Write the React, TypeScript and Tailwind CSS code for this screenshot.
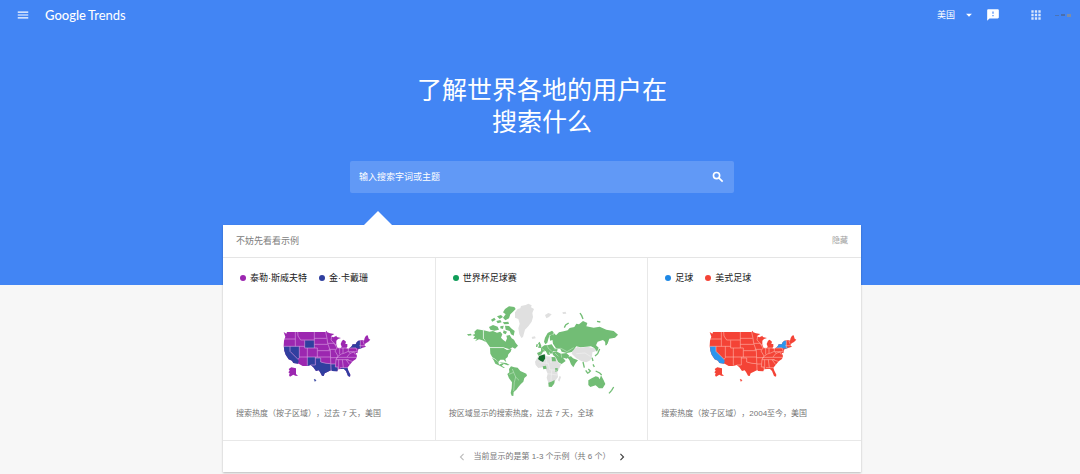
import React from "react";
import {
  MdApps,
  MdArrowDropDown,
  MdChevronLeft,
  MdChevronRight,
  MdFeedback,
  MdMenu,
} from "react-icons/md";

type State = "ca" | "nv" | "wy" | "nm" | "tx" | "la" | "fl" | "ny";

const statePaths: Record<State, string> = {
  ca: "M42 79H60V94L84 118L86 124L84 131L70 129L66 122L56 118L47 104L43 92Z",
  nv: "M60 79H88V113L84 118L60 94Z",
  wy: "M104 61H133V84H104Z",
  nm: "M112 111H136V135H122L112 138Z",
  tx: "M136 114H152V126L168 130L182 131L184 150L172 156L164 160L161 168L156 167L150 156L146 151L138 153L130 142L122 135H136Z",
  la: "M183 132H196V141H204L202 154L186 153L184 150Z",
  fl: "M212 143H232L235 152L241 164L240 170L234 168L228 153L222 147L213 147Z",
  ny: "M239 84L245 79L248 73L257 73L260 67L265 62H271V78L276 84L264 86L258 83Z",
};

const usOutline =
  "M41 36L49 41L51 36H167L169 32L172 37L180 40L193 42L182 49L190 52L200 47L200 51L213 54L204 57L199 62V74L203 84H213L215 80L212 72L216 62L221 59L228 65L226 72L232 72L232 80L228 85L236 86L245 79L248 73H257L260 67L265 62L278 60L282 62L284 54L288 47L293 46L296 56L301 59L294 66L287 70L283 76L288 80L276 84L265 88L262 100L257 98L261 108L258 117L248 124L237 137L232 143L235 152L241 164L240 170L234 168L228 153L222 147L213 147L204 148L202 154L186 153L184 150L172 156L164 160L161 168L156 167L150 156L146 151L138 153L130 142L122 135L112 138H98L86 131L70 129L66 122L56 118L47 104L43 92L41 78L42 62L46 50Z";

const usBorders =
  "M42 57H76M76 36V79M42 79H104M60 79V94L84 118L88 113V79M83 36L84 48L92 60H133M104 61V84H142V92H181M133 36V84M133 55H170M133 73H173M88 111H182M112 84V137M142 92V111M136 111V135H122M136 114H152V126L168 130L182 131M181 92L183 150M167 36L171 55L173 70L181 92M173 70H194M176 88H197M185 49L183 60L194 72L201 84L195 93L204 108L198 118L196 141H204V148M182 113H204M183 132H196M194 74H202M203 84H228M209 84V103M219 84V99M235 86V94L224 99L214 102L204 109M200 112H260M198 119H236M206 119V147M217 119L220 143M210 143H232M228 119L239 134M230 119L246 124M235 94L240 100L231 111M236 95H262M239 84H258L262 94M240 100L252 96L256 104M271 62V84M268 77H284M278 61L283 74";

function UsMap({
  fill,
  accent,
  border,
  states,
  label,
}: {
  fill: string;
  accent: string;
  border: string;
  states: State[];
  label: string;
}) {
  return (
    <svg role="img" aria-label={label} width="118" height="80" viewBox="0 -30 354 240">
      <path d={usOutline} fill={fill} />
      <path
        d="M56 147L64 142L78 145V162L84 168L76 167L70 164L60 170L57 166L59 160L55 157L59 152Z"
        fill={fill}
      />
      <path
        d="M133 178L138 181L135 184Z"
        fill={states.includes("tx") ? accent : fill}
        stroke={states.includes("tx") ? accent : fill}
        strokeWidth="2"
      />
      {states.map((s) => (
        <path key={s} d={statePaths[s]} fill={accent} />
      ))}
      <path d={usBorders} fill="none" stroke={border} strokeWidth="1.8" />
    </svg>
  );
}

function WorldMap() {
  return (
    <svg role="img" aria-label="全球" width="176" height="110" viewBox="-20 0 528 330">
      <g fill="#e0e0e0">
        <path d="M166 52L174 42L182 40L184 33L198 30L206 26L216 31L214 37L223 42L218 54L220 66L216 80L206 94L196 104L190 126L185 129L179 118L176 100L180 86L176 72L166 68Z" />
        <path d="M226 200L232 190L238 180L256 178L260 184L276 185L288 188L296 204L305 207L298 222L293 232L295 246L286 258L282 270L272 274L266 264L261 248L264 236L258 222L250 217L236 219L228 210Z" />
        <path d="M300 242L304 246L299 260L295 256Z" />
        <path d="M340 163L354 156L362 158L384 155L396 158L405 160L410 168L398 172L397 184L392 196L380 202L366 199L350 190L336 176Z" />
        <path d="M256 60L266 54L276 58L268 66L260 70Z" />
        <path d="M308 52L318 50L320 56L310 57Z" />
        <path d="M216 126L226 124L228 130L218 132Z" />
      </g>
      <g fill="#72bd75">
        <path d="M44 110L52 103L70 106V130L80 142L68 136L58 133L46 139L52 131L41 132L46 124L38 120L46 117Z" />
        <path d="M72 106L90 110L100 108L112 113L122 110L128 118L124 128L130 134L138 140L142 130L140 122L150 120L156 130L163 134L168 144L175 152L166 161L158 157L150 163L140 160L130 157H91L82 144L72 130Z" />
        <path d="M91 159H132L142 165L156 161L153 170L146 178L144 186L137 192L140 202L132 194L122 194L116 201L108 193L98 187L92 176Z" />
        <path d="M97 188L108 194L116 201L118 209L128 205L132 208L126 212L136 218L132 219L120 212L107 206L102 196Z" />
        <path d="M148 222L154 214L164 217L174 218L182 228L200 236L202 242L194 249L191 260L183 268L176 276L170 284L162 291L161 303L156 302L153 294L156 280L157 262L148 250L143 237L149 232Z" />
        <path d="M136 42L148 34L164 36L168 42L160 50L152 58L148 70L137 76L130 68L138 58L130 52Z" />
        <path d="M94 74L104 68L108 74L98 80ZM88 96L100 90L114 95L118 104L104 107L92 104ZM112 64L124 60L130 66L120 72ZM110 78L122 75L126 82L114 85ZM129 82L146 80L148 87L134 88ZM122 94L132 92L130 102L122 100ZM136 92L148 93L156 101L165 108L162 122L154 118L150 108L138 104ZM132 106L142 110L138 118L130 114Z" />
        <path d="M22 118L34 116L36 121L26 122ZM118 202L140 204L150 210L144 211Z" />
        <path d="M253 140L256 128L264 114L277 107L282 112L278 119L270 120L266 132L263 143L257 148Z" />
        <path d="M270 122L280 118L281 134L271 137Z" />
        <path d="M235 145L240 140L245 152L244 159L235 158L238 151ZM230 148H235L233 156H229Z" />
        <path d="M244 158L254 151L266 150L276 148L284 160L294 163L292 170L280 169L274 178L268 170L271 180L264 179L258 168L250 170L246 178L236 182L232 174L244 169Z" />
        <path d="M277 172L292 170L304 176L320 174L329 182L322 191L310 188L318 198L306 207L296 202L288 187L280 180Z" />
        <path d="M276 186L287 187L289 199L277 199Z" />
        <path d="M282 113L289 121L298 112L312 109L324 106L330 99L344 96L350 86L358 88L370 78L383 84L380 94L402 98L420 95L440 104L462 108L475 119L466 128L449 131L444 145L438 152L436 140L430 135L414 140L409 151L417 158L412 170L404 159L394 154L380 155L362 157L350 154L342 164L336 171L322 174L306 170L302 162L290 161L280 146L278 132Z" />
        <path d="M322 186L334 184L340 190L355 196L348 204L341 217L334 208L329 195Z" />
        <path d="M386 256L396 250L408 244L416 246L420 253L424 241L432 256L437 267L429 280L418 280L408 271L392 276L386 270Z" />
        <path d="M266 263L275 260L285 255L284 265L276 276L267 275Z" />
        <path d="M249 214L259 212L261 221L251 223ZM286 220L294 219V228L287 230Z" />
      </g>
      <g fill="none" stroke="#72bd75" strokeWidth="4">
        <path d="M314 98L318 90L327 84M361 54L366 62L370 72M412 79L422 81M439 150L444 139M420 162L414 176L406 183M397 188L400 198M370 201L374 218M378 226L385 236M386 222L392 228L386 234M408 228L420 234L426 240M400 208L404 216M462 276L456 286L448 295" />
      </g>
      <path d="M239 183L255 178L257 190L250 201L242 197L235 192Z" fill="#126b2a" />
      <path
        d="M71 104V132M91 158H134M284 162L304 160L322 170L342 158M148 238L162 232L168 246L178 256M158 222L162 232M168 246L164 262L162 288M286 174L296 184M304 172L306 188M246 160L256 168M262 150L266 160L276 168"
        fill="none"
        stroke="#d3ecd4"
        strokeWidth="1.5"
      />
      <path
        d="M240 203L266 205L270 224L292 226M258 186L262 206M272 186L274 204M264 236L292 240M276 226L274 256M350 176L376 174L392 184"
        fill="none"
        stroke="#f4f4f4"
        strokeWidth="1.5"
      />
    </svg>
  );
}

interface Example {
  terms: { name: string; dot: string }[];
  caption: string;
  map: React.ReactNode;
}

const examples: Example[] = [
  {
    terms: [
      { name: "泰勒·斯威夫特", dot: "bg-[#9c27b0]" },
      { name: "金·卡戴珊", dot: "bg-[#303f9f]" },
    ],
    caption: "搜索热度（按子区域），过去 7 天，美国",
    map: (
      <UsMap
        label="美国"
        fill="#9c27b0"
        accent="#303f9f"
        border="#dca5e4"
        states={["ca", "nv", "wy", "nm", "tx", "la", "fl", "ny"]}
      />
    ),
  },
  {
    terms: [{ name: "世界杯足球赛", dot: "bg-[#0f9d58]" }],
    caption: "按区域显示的搜索热度，过去 7 天，全球",
    map: <WorldMap />,
  },
  {
    terms: [
      { name: "足球", dot: "bg-[#1e88e5]" },
      { name: "美式足球", dot: "bg-[#f44336]" },
    ],
    caption: "搜索热度（按子区域），2004至今，美国",
    map: (
      <UsMap label="美国" fill="#f44336" accent="#2b95ee" border="#ffb9ae" states={["ca", "ny"]} />
    ),
  },
];

function TopBar() {
  return (
    <header className="flex h-[30px] items-center pr-[9px] pl-4">
      <button type="button" aria-label="主菜单">
        <MdMenu size={14} />
      </button>
      <a
        href="#"
        className="ml-[15px] flex items-baseline gap-[2px] font-['Lato','Liberation_Sans',sans-serif] text-[13px] leading-4"
      >
        <span className="font-medium">Google</span>
        <span>Trends</span>
      </a>
      <div className="ml-auto flex items-center">
        <div className="relative flex items-center">
          <select
            aria-label="国家/地区"
            className="w-[39px] appearance-none bg-transparent text-[9px] leading-3 outline-none"
          >
            <option>美国</option>
          </select>
          <MdArrowDropDown size={14} className="pointer-events-none absolute right-0" />
        </div>
        <button type="button" aria-label="发送反馈" className="ml-[10px]">
          <MdFeedback size={14} />
        </button>
        <button type="button" aria-label="Google 应用" className="ml-[29px] opacity-80">
          <MdApps size={14} />
        </button>
        <button type="button" aria-label="帐号" className="ml-3 flex h-3 items-center gap-[2px]">
          <span className="h-px w-1 bg-[#4a74b8]" />
          <span className="h-[2px] w-1 bg-[#4a6fae]" />
          <span className="h-[3px] w-1 bg-[#7d8ea8]" />
        </button>
      </div>
    </header>
  );
}

function ExampleColumn({ example }: { example: Example }) {
  return (
    <article className="px-[13px] pt-[14px] pb-5">
      <ul className="flex h-3 items-center gap-3 pl-1 text-[9px] leading-3 text-[#212121]">
        {example.terms.map((t) => (
          <li key={t.name} className="flex items-center gap-1">
            <span className={`size-[6px] rounded-full ${t.dot}`} />
            {t.name}
          </li>
        ))}
      </ul>
      <div className="mt-[11px] flex h-[110px] items-center justify-center">{example.map}</div>
      <p className="mt-[3px] text-[8px] leading-3 whitespace-nowrap text-[#757575] [text-spacing-trim:space-all]">
        {example.caption}
      </p>
    </article>
  );
}

export default function App() {
  return (
    <div
      lang="zh-CN"
      className="min-h-screen bg-[#f7f7f7] font-['Liberation_Sans','Noto_Sans_CJK_SC',sans-serif]"
    >
      <div className="bg-[#4285f4] pb-[92px] text-white">
        <TopBar />
        <div className="flex flex-col items-center pt-11 pl-1">
          <h1 className="max-w-64 text-center text-[25px] leading-8 font-normal">
            了解世界各地的用户在搜索什么
          </h1>
          <form
            role="search"
            onSubmit={(e) => e.preventDefault()}
            className="mt-[23px] flex h-8 w-full max-w-96 items-center rounded-[2px] bg-[#6199f6] px-[9px]"
          >
            <input
              type="text"
              aria-label="输入搜索字词或主题"
              placeholder="输入搜索字词或主题"
              className="min-w-0 flex-1 bg-transparent text-[9px] leading-3 outline-none placeholder:text-white"
            />
            <button type="submit" aria-label="搜索">
              <svg
                width="14"
                height="14"
                viewBox="0 0 24 24"
                fill="none"
                stroke="currentColor"
                strokeWidth="2.8"
              >
                <circle cx="9.5" cy="9.5" r="5.3" />
                <path d="M13.5 13.5L20 20" />
              </svg>
            </button>
          </form>
        </div>
      </div>

      <main className="-mt-[60px] flex justify-center pb-[2px] pl-1">
        <section className="relative w-full max-w-[638px] bg-white shadow-[0_1px_2px_rgba(0,0,0,0.25)]">
          <svg
            aria-hidden="true"
            className="absolute -top-[14px] left-[141px]"
            width="28"
            height="14"
            viewBox="0 0 28 14"
          >
            <path d="M14 0L28 14H0Z" fill="#fff" />
          </svg>
          <div className="flex h-[33px] items-center justify-between border-b border-[#e5e5e5] px-[13px]">
            <h2 className="text-[9px] leading-3 text-[#808080]">不妨先看看示例</h2>
            <button type="button" className="text-[8px] leading-3 text-[#9e9e9e]">
              隐藏
            </button>
          </div>
          <div className="grid grid-cols-3 divide-x divide-[#e8e8e8]">
            {examples.map((e) => (
              <ExampleColumn key={e.caption} example={e} />
            ))}
          </div>
          <nav
            aria-label="示例分页"
            className="flex h-8 items-center justify-center gap-[5px] border-t border-[#e8e8e8] text-[8px] leading-3 text-[#757575]"
          >
            <button type="button" aria-label="上一页" disabled className="text-[#bdbdbd]">
              <MdChevronLeft size={14} />
            </button>
            <span>当前显示的是第 1-3 个示例（共 6 个）</span>
            <button type="button" aria-label="下一页" className="text-[#424242]">
              <MdChevronRight size={14} />
            </button>
          </nav>
        </section>
      </main>
    </div>
  );
}
